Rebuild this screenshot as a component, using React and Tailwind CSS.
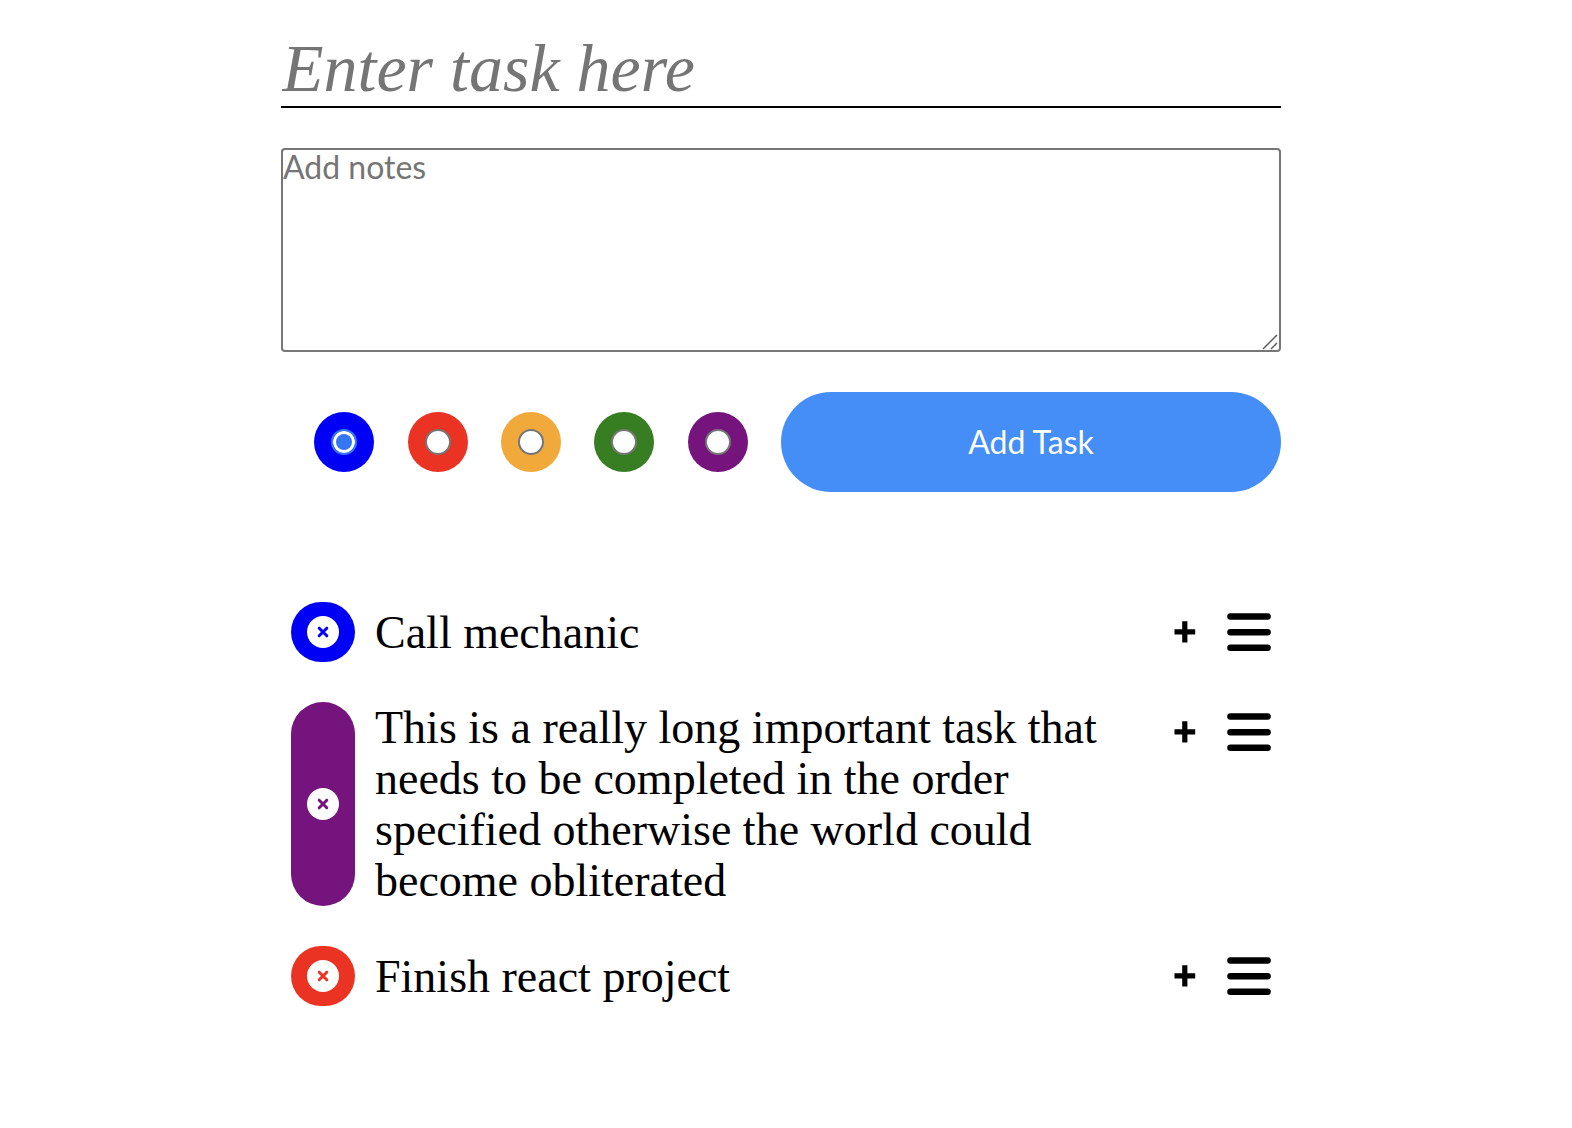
import { useState } from "react";

const COLORS = [
  { name: "blue", bg: "bg-[#0000f5]", text: "text-[#0000f5]" },
  { name: "red", bg: "bg-[#ea3323]", text: "text-[#ea3323]" },
  { name: "orange", bg: "bg-[#f2a93b]", text: "text-[#f2a93b]" },
  { name: "green", bg: "bg-[#377e22]", text: "text-[#377e22]" },
  { name: "purple", bg: "bg-[#75147c]", text: "text-[#75147c]" },
];

const TASKS = [
  { title: "Call mechanic", color: COLORS[0] },
  {
    title:
      "This is a really long important task that needs to be completed in the order specified otherwise the world could become obliterated",
    color: COLORS[4],
  },
  { title: "Finish react project", color: COLORS[1] },
];

function ColorOption({ color, checked, onSelect }) {
  return (
    <label className={`flex size-[60px] items-center justify-center rounded-full ${color.bg}`}>
      <input
        type="radio"
        name="color"
        value={color.name}
        aria-label={color.name}
        checked={checked}
        onChange={onSelect}
        className="size-[26px] appearance-none rounded-full border-2 border-[#767676] bg-white checked:border-[#3577f3] checked:bg-[#3577f3] checked:shadow-[inset_0_0_0_3px_#ffffff]"
      />
    </label>
  );
}

function Task({ task }) {
  return (
    <li className="flex gap-5 px-[10px]">
      <button
        type="button"
        aria-label={`Remove ${task.title}`}
        className={`flex w-16 shrink-0 items-center justify-center rounded-[32px] ${task.color.bg}`}
      >
        <span className={`flex size-8 items-center justify-center rounded-full bg-white ${task.color.text}`}>
          <svg viewBox="0 0 12 12" className="size-3" fill="none" stroke="currentColor" strokeWidth="3" strokeLinecap="round">
            <path d="M2.2 2.2l7.6 7.6M9.8 2.2L2.2 9.8" />
          </svg>
        </span>
      </button>
      <div className="flex min-h-[60px] min-w-0 flex-1 items-center">
        <p className="max-w-[740px] text-[46px] leading-[51px]">{task.title}</p>
      </div>
      <div className="flex h-[60px] shrink-0 items-center gap-[31px]">
        <button type="button" aria-label="Show notes">
          <svg viewBox="0 0 22 22" className="size-[22px]" fill="currentColor">
            <path d="M8.2 0.3h5.2v7.9h7.8v5.2h-7.8v8.1H8.2v-8.1H0.5V8.2h7.7z" />
          </svg>
        </button>
        <button type="button" aria-label="Reorder">
          <svg viewBox="0 0 44 38" className="h-[38px] w-11" fill="currentColor">
            <rect x="0.2" y="0.3" width="43.6" height="6.5" rx="3.2" />
            <rect x="0.2" y="15.9" width="43.6" height="6.5" rx="3.2" />
            <rect x="0.2" y="31.4" width="43.6" height="6.5" rx="3.2" />
          </svg>
        </button>
      </div>
    </li>
  );
}

export default function App() {
  const [color, setColor] = useState("blue");

  return (
    <div className="min-h-screen bg-white pr-[10px] text-black">
      <main className="mx-auto max-w-[1000px] pt-[30px] font-['Liberation_Serif',serif]">
        <form onSubmit={(e) => e.preventDefault()}>
          <input
            type="text"
            aria-label="Task"
            placeholder="Enter task here"
            className="block h-[78px] w-full border-b-2 border-black pl-px text-[68px] italic outline-none placeholder:text-[#757575]"
          />
          <textarea
            aria-label="Notes"
            placeholder="Add notes"
            className="mt-10 block h-[204px] w-full resize-none rounded-[4px] border-2 border-[#767676] font-['Lato',sans-serif] text-[32px] leading-[34px] outline-none placeholder:text-[#757575]"
          />
          <div className="relative">
            <svg
              viewBox="0 0 16 16"
              aria-hidden="true"
              className="pointer-events-none absolute right-[3px] bottom-[2px] size-4"
              fill="none"
              stroke="#5c5c5c"
              strokeWidth="1.5"
            >
              <path d="M1 15L15 1M9 15l6-6" />
            </svg>
          </div>
          <div className="mt-10 flex">
            <div className="flex flex-1 items-center justify-evenly">
              {COLORS.map((c) => (
                <ColorOption key={c.name} color={c} checked={color === c.name} onSelect={() => setColor(c.name)} />
              ))}
            </div>
            <button
              type="submit"
              className="h-[100px] flex-1 rounded-full bg-[#458ef7] font-['Lato',sans-serif] text-[32px] text-white"
            >
              Add Task
            </button>
          </div>
        </form>
        <ul className="mt-[110px] flex flex-col gap-10">
          {TASKS.map((t) => (
            <Task key={t.title} task={t} />
          ))}
        </ul>
      </main>
    </div>
  );
}
